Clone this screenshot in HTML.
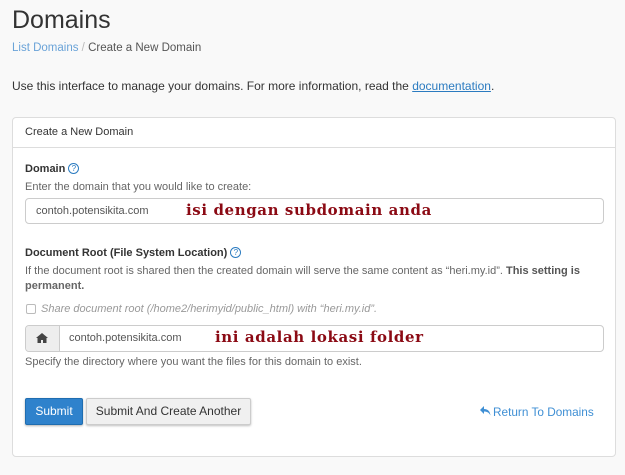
<!DOCTYPE html>
<html><head><meta charset="utf-8"><style>
body{margin:0;width:625px;height:475px;background:#f9f9f9;font-family:"Liberation Sans","DejaVu Sans",sans-serif;color:#333;overflow:hidden;position:relative}
.a{position:absolute;white-space:nowrap}
.sm{font-size:11px}
.help{display:inline-block;width:9px;height:9px;border:1px solid #2b7bc0;border-radius:50%;color:#2b7bc0;font-size:8px;line-height:9px;text-align:center;vertical-align:1px;margin-left:3px;font-weight:normal}
.ann{font-family:"DejaVu Serif",serif;font-weight:bold;color:#8b0a14;font-size:15px;letter-spacing:.6px}
.inp{position:absolute;background:#fff;border:1px solid #ccc;border-radius:4px;box-sizing:border-box}
</style></head><body>
<div class="a" style="left:12px;top:6px;font-size:25px;color:#333">Domains</div>
<div class="a" style="left:12px;top:42px;font-size:11.5px"><span style="color:#6aa3d8">List Domains</span> <span style="color:#bbb">/</span> <span style="color:#555">Create a New Domain</span></div>
<div class="a" style="left:12px;top:79px;font-size:12px">Use this interface to manage your domains. For more information, read the <span style="color:#2b7bc0;text-decoration:underline">documentation</span>.</div>
<div style="position:absolute;left:12px;top:117px;width:604px;height:340px;background:#fff;border:1px solid #ddd;border-radius:4px;box-sizing:border-box"></div>
<div style="position:absolute;left:13px;top:147px;width:602px;height:1px;background:#ddd"></div>
<div class="a sm" style="left:25px;top:126px;color:#333">Create a New Domain</div>
<div class="a sm" style="left:25px;top:163px;font-weight:bold">Domain<span class="help">?</span></div>
<div class="a sm" style="left:25px;top:181px;color:#666">Enter the domain that you would like to create:</div>
<div class="inp" style="left:25px;top:198px;width:579px;height:26px"></div>
<div class="a sm" style="left:36px;top:205px;color:#555">contoh.potensikita.com</div>
<div class="a ann" style="left:186px;top:201px">isi dengan subdomain anda</div>
<div class="a sm" style="left:25px;top:247px;font-weight:bold">Document Root (File System Location)<span class="help">?</span></div>
<div class="a sm" style="left:25px;top:265px;color:#666">If the document root is shared then the created domain will serve the same content as “heri.my.id”. <b style="color:#555">This setting is</b></div>
<div class="a sm" style="left:25px;top:280px;color:#666;font-weight:bold">permanent.</div>
<div style="position:absolute;left:26px;top:304px;width:8px;height:8px;border:1px solid #bbb;border-radius:2px;background:#fff"></div>
<div class="a sm" style="left:41px;top:303px;color:#999;font-style:italic">Share document root (/home2/herimyid/public_html) with “heri.my.id”.</div>
<div class="inp" style="left:25px;top:325px;width:579px;height:27px"></div>
<div style="position:absolute;left:26px;top:326px;width:33px;height:25px;background:#eee;border-right:1px solid #ccc;border-radius:3px 0 0 3px"></div>
<svg style="position:absolute;left:36px;top:333px" width="12" height="10" viewBox="0 0 12 10"><path d="M6 0L0 5h1.5v5h3.5V7h2v3h3.5V5H12z" fill="#444"/></svg>
<div class="a sm" style="left:69px;top:332px;color:#555">contoh.potensikita.com</div>
<div class="a ann" style="left:215px;top:328px">ini adalah lokasi folder</div>
<div class="a sm" style="left:25px;top:356px;color:#666">Specify the directory where you want the files for this domain to exist.</div>
<div style="position:absolute;left:25px;top:398px;width:58px;height:27px;background:#2f82cc;border:1px solid #1f6db0;border-radius:2px;box-sizing:border-box;color:#fff;font-size:12px;text-align:center;line-height:25px;box-shadow:0 1px 2px rgba(0,0,0,.3)">Submit</div>
<div style="position:absolute;left:86px;top:398px;width:165px;height:27px;background:#f0f0f0;border:1px solid #ccc;border-radius:2px;box-sizing:border-box;color:#333;font-size:12px;text-align:center;line-height:25px;box-shadow:0 1px 2px rgba(0,0,0,.25)">Submit And Create Another</div>
<svg style="position:absolute;left:480px;top:406px" width="11" height="10" viewBox="0 0 11 10"><path d="M4 0L0 4l4 4V5.5c3 0 5 1 6.5 4C10 5.5 8 3 4 3z" fill="#3f8fd4"/></svg>
<div class="a" style="left:493px;top:405px;color:#3f8fd4;font-size:11.8px">Return To Domains</div>
</body></html>
